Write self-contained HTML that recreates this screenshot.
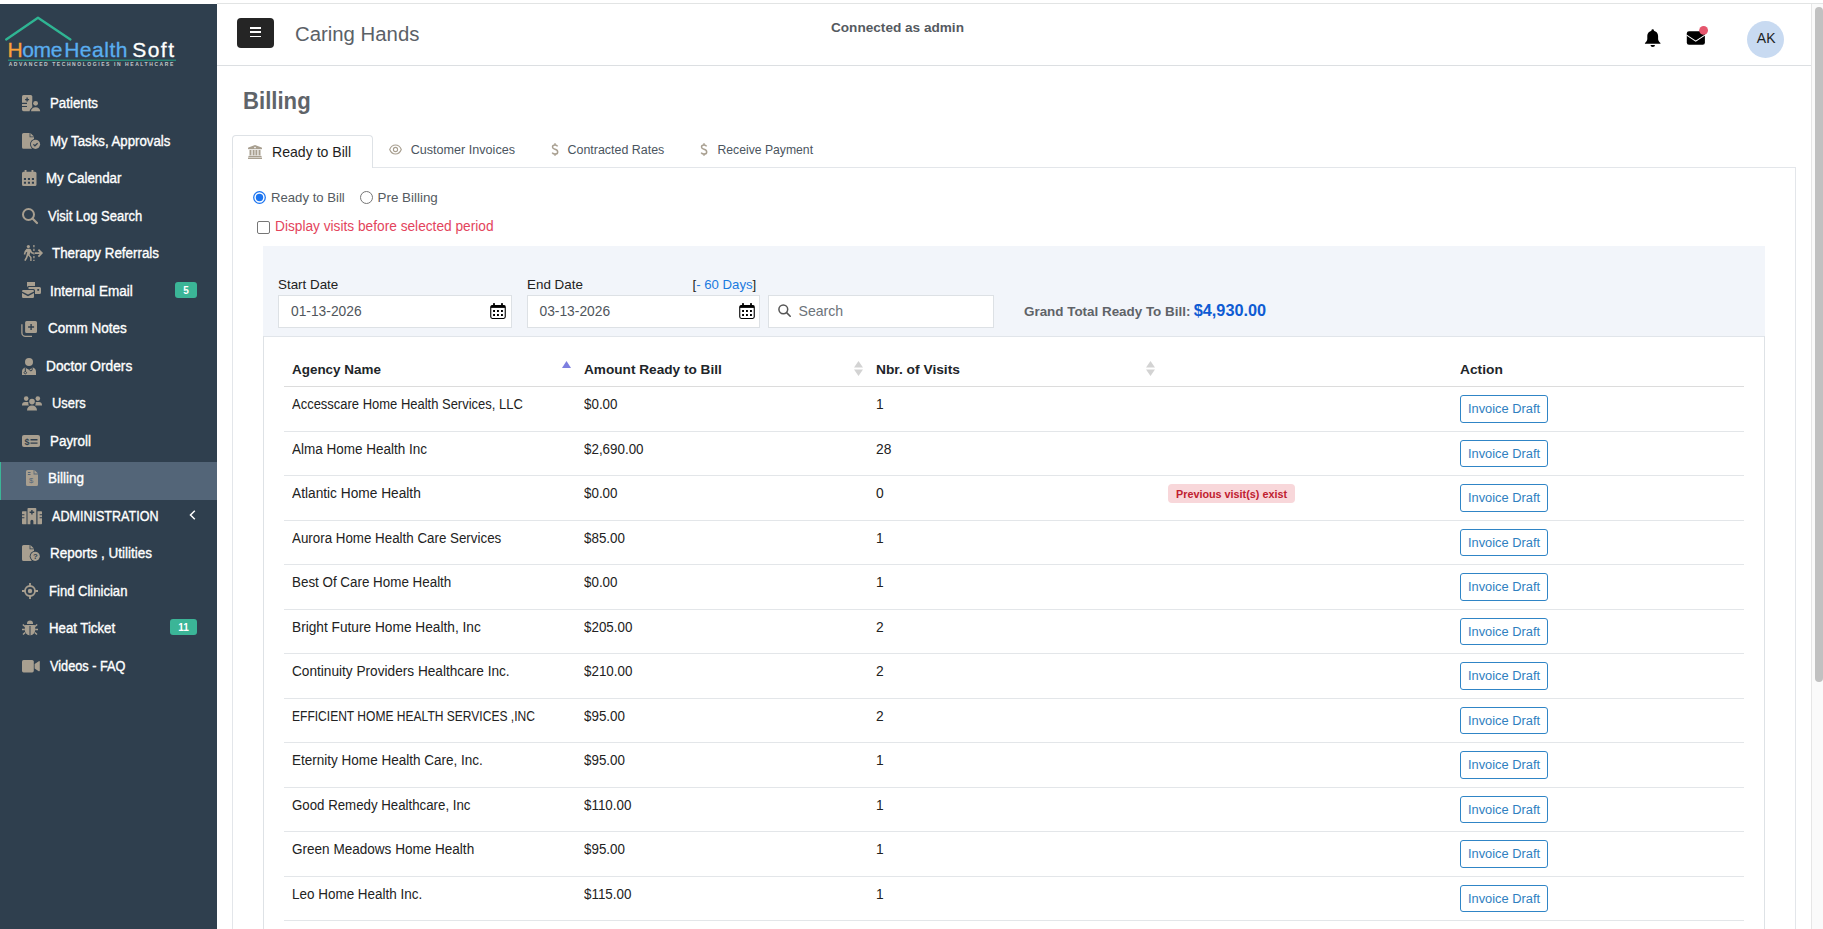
<!DOCTYPE html><html><head><meta charset="utf-8"><style>
*{box-sizing:border-box;margin:0;padding:0}
html,body{width:1823px;height:929px;overflow:hidden;background:#fff;font-family:"Liberation Sans",sans-serif;color:#222}
.a{position:absolute;white-space:nowrap}
#side{position:absolute;left:0;top:4px;width:217px;height:925px;background:#2f3f4e}
.t{position:absolute;color:#fff;white-space:nowrap;line-height:16px}
svg{position:absolute;overflow:visible}
.badge{position:absolute;background:#3bb597;color:#fff;font-weight:bold;font-size:10px;text-align:center;border-radius:3px;line-height:18px;height:16px;overflow:hidden}
.ic{fill:#a89f90}
#sb{position:absolute;left:1811px;top:4px;width:12px;height:925px;background:#fafafa;border-left:1px solid #e6e6e6}
#thumb{position:absolute;left:1815px;top:7px;width:8px;height:675px;background:#c1c1c1;border-radius:4px}
.btn{position:absolute;left:1460px;width:88px;height:27.5px;border:1px solid #3085c6;border-radius:3px;color:#2f7fbf;font-size:12.85px;line-height:25.6px;text-align:center;white-space:nowrap}
.rl{position:absolute;left:284px;width:1460px;height:1px;background:#e3e6e9}
.cell{position:absolute;font-size:13px;color:#222;line-height:16px;white-space:nowrap}
</style></head><body><div id="side"><svg style="left:0;top:-4px" width="217" height="70" viewBox="0 0 217 70"><path d="M6.2 39.4L38 17.8L70.4 39.4" fill="none" stroke="#2fb593" stroke-width="2.4" stroke-linejoin="round" stroke-linecap="round"/><rect x="8" y="59.6" width="168" height="1.3" fill="#2a8f7c"/></svg><div class="t" style="left:7.6px;top:33.5px;font-size:21px;line-height:24px;color:#f7a23b;-webkit-text-stroke:0.3px #f7a23b">H</div><div class="t" style="left:22.2px;top:33.5px;font-size:21px;line-height:24px;color:#5aaef0;-webkit-text-stroke:0.3px #5aaef0;letter-spacing:-0.3px">ome</div><div class="t" style="left:64.2px;top:33.5px;font-size:21px;line-height:24px;color:#5aaef0;-webkit-text-stroke:0.3px #5aaef0;letter-spacing:0.5px">Health</div><div class="t" style="left:132.2px;top:33.5px;font-size:21px;line-height:24px;color:#fff;-webkit-text-stroke:0.3px #fff;letter-spacing:1.5px">Soft</div><div class="t" style="left:8.7px;top:56.5px;font-size:5px;line-height:6px;letter-spacing:1.57px;color:#c3c7ca;font-weight:bold">ADVANCED TECHNOLOGIES IN HEALTHCARE</div><div class="a" style="left:0;top:458px;width:217px;height:38px;background:#536578;border-left:1px solid #3bb597"></div><div class="t" style="left:50.0px;top:91.0px;font-size:14.00px;transform:scaleX(0.9489);transform-origin:0 0;-webkit-text-stroke:0.35px #fff">Patients</div><svg style="left:22px;top:91px" width="19" height="17" viewBox="0 0 19 17"><rect class="ic" x="0" y="0" width="10.3" height="16.2" rx="1.6"/><path fill="#2f3f4e" d="M4.4 2.6h1.4v1.3h1.3v1.4H5.8v1.3H4.4V5.3H3.1V3.9h1.3zM0 7.8h5v1.1H0zM0 10.9h5v1.1H0z"/><circle cx="13.6" cy="8.3" r="3.3" fill="#2f3f4e"/><path fill="#2f3f4e" d="M7.6 17c0-3 2.2-5.2 6-5.2s6 2.2 6 5.2z"/><circle class="ic" cx="13.6" cy="8.3" r="2.4"/><path class="ic" d="M9 16.2c0-2.3 1.8-4 4.6-4s4.6 1.7 4.6 4z"/></svg><div class="t" style="left:50.0px;top:129.0px;font-size:14.00px;transform:scaleX(0.9449);transform-origin:0 0;-webkit-text-stroke:0.35px #fff">My Tasks, Approvals</div><svg style="left:22px;top:129px" width="18" height="17" viewBox="0 0 18 17"><path class="ic" d="M1.6 0H7.6v4.2H12v11.6H1.6A1.6 1.6 0 0 1 0 14.2V1.6A1.6 1.6 0 0 1 1.6 0zM8.4 0L12 3.5H8.4z"/><circle cx="13.5" cy="11.3" r="5.5" fill="#2f3f4e"/><circle class="ic" cx="13.5" cy="11.3" r="4.6"/><path fill="none" stroke="#2f3f4e" stroke-width="1.2" d="M11.4 11.4l1.5 1.4 2.7-2.6"/></svg><div class="t" style="left:46.0px;top:166.0px;font-size:14.00px;transform:scaleX(0.9500);transform-origin:0 0;-webkit-text-stroke:0.35px #fff">My Calendar</div><svg style="left:22px;top:166px" width="15" height="16" viewBox="0 0 15 16"><path class="ic" d="M2.6 0h1.9v1.7h5V0h1.9v1.7h1.6A1.5 1.5 0 0 1 14.5 3.2v11.4a1.5 1.5 0 0 1-1.5 1.5H1.5A1.5 1.5 0 0 1 0 14.6V3.2A1.5 1.5 0 0 1 1.5 1.7h1.1z"/><path fill="#2f3f4e" d="M1.9 7.9h2.1v2.1H1.9zM5.9 7.9h2.1v2.1H5.9zM9.9 7.9h2.1v2.1H9.9zM1.9 11.7h2.1v2.1H1.9zM5.9 11.7h2.1v2.1H5.9zM9.9 11.7h2.1v2.1H9.9z"/></svg><div class="t" style="left:48.0px;top:204.0px;font-size:14.00px;transform:scaleX(0.9263);transform-origin:0 0;-webkit-text-stroke:0.35px #fff">Visit Log Search</div><svg style="left:22px;top:204px" width="16" height="16" viewBox="0 0 16 16"><circle cx="6.5" cy="6.5" r="5.5" fill="none" stroke="#a89f90" stroke-width="2"/><path d="M10.5 10.5L15 15" stroke="#a89f90" stroke-width="2.2" stroke-linecap="round"/></svg><div class="t" style="left:52.0px;top:241.0px;font-size:14.00px;transform:scaleX(0.9550);transform-origin:0 0;-webkit-text-stroke:0.35px #fff">Therapy Referrals</div><svg style="left:22px;top:241px" width="21" height="16" viewBox="0 0 21 16"><circle class="ic" cx="6.4" cy="1.6" r="1.6"/><path class="ic" d="M4.6 3.8h3c.6 0 1 .3 1.3.8l1.2 2.5 1.5.7-.6 1.3-2-.9-.6-1.2-.8 2.9 2 2.4V16H8.2v-3.2L6.2 10.6l-1 2.7L3.6 16 2.2 15.3l1.8-3.3 1.3-5.3-1.4.7-.7 2.3-1.5-.4 1-3.2z"/><path fill="none" stroke="#a89f90" stroke-width="1.3" stroke-dasharray="2.2 1.5" d="M11.9 0v16"/><path fill="none" stroke="#a89f90" stroke-width="1.8" d="M13 8.1h6.6M16.4 4.6l3.4 3.5-3.4 3.5"/></svg><div class="t" style="left:50.4px;top:279.0px;font-size:14.00px;transform:scaleX(0.9662);transform-origin:0 0;-webkit-text-stroke:0.35px #fff">Internal Email</div><svg style="left:22px;top:278px" width="19" height="16" viewBox="0 0 19 16"><path class="ic" d="M5 0h8v4H6.5A1.5 1.5 0 0 0 5 5.5zM6.5 5H17.5A1.5 1.5 0 0 1 19 6.5v4A1.5 1.5 0 0 1 17.5 12H13V8.5A1.5 1.5 0 0 0 11.5 7h-5z"/><path fill="#2f3f4e" d="M15.3 7h1.8v1.8h-1.8z"/><path class="ic" d="M0 9.2A1.2 1.2 0 0 1 1.2 8h9.6A1.2 1.2 0 0 1 12 9.2v.3L6 12.6 0 9.5zM0 11l6 3.2 6-3.2v3.8A1.2 1.2 0 0 1 10.8 16H1.2A1.2 1.2 0 0 1 0 14.8z"/></svg><div class="t" style="left:48.0px;top:316.0px;font-size:14.00px;transform:scaleX(0.9647);transform-origin:0 0;-webkit-text-stroke:0.35px #fff">Comm Notes</div><svg style="left:21px;top:317px" width="16" height="16" viewBox="0 0 16 16"><path class="ic" d="M5.6 0h8.9A1.5 1.5 0 0 1 16 1.5v8.9a1.5 1.5 0 0 1-1.5 1.5H5.6a1.5 1.5 0 0 1-1.5-1.5V1.5A1.5 1.5 0 0 1 5.6 0z"/><path fill="#2f3f4e" d="M9.4 3h1.4v2.3h2.3v1.4h-2.3V9H9.4V6.7H7.1V5.3h2.3z"/><path fill="none" stroke="#a89f90" stroke-width="1.3" d="M.9 3.2v8.6a3.6 3.6 0 0 0 3.6 3.6H11"/></svg><div class="t" style="left:46.0px;top:354.0px;font-size:14.00px;transform:scaleX(0.9817);transform-origin:0 0;-webkit-text-stroke:0.35px #fff">Doctor Orders</div><svg style="left:22px;top:353.5px" width="14" height="17" viewBox="0 0 14 17"><circle class="ic" cx="7" cy="4" r="4"/><path class="ic" d="M3 9.5l4 2.3 4-2.3c1.9.6 3 2.2 3 4.2V17H0v-3.3c0-2 1.1-3.6 3-4.2z"/><path fill="none" stroke="#2f3f4e" stroke-width="1" d="M3.3 10v3.5M3.3 13.5a1.2 1.2 0 1 0 .01 0M10.2 10v1.5a1.3 1.3 0 0 1-2.6 0"/></svg><div class="t" style="left:52.4px;top:391.0px;font-size:14.00px;transform:scaleX(0.9190);transform-origin:0 0;-webkit-text-stroke:0.35px #fff">Users</div><svg style="left:22px;top:392px" width="20" height="15" viewBox="0 0 20 15"><circle class="ic" cx="4.2" cy="2.6" r="2.3"/><circle class="ic" cx="15.8" cy="2.6" r="2.3"/><circle class="ic" cx="10" cy="5.6" r="2.8"/><path class="ic" d="M0 9c0-2 1.2-3 3-3h2.3c.4 0 .8.1 1.1.3A4 4 0 0 0 6.9 9.5H0zM20 9c0-2-1.2-3-3-3h-2.3c-.4 0-.8.1-1.1.3a4 4 0 0 1-.5 3.2H20zM5 14.5c0-3 1.8-5 5-5s5 2 5 5z"/></svg><div class="t" style="left:50.0px;top:429.0px;font-size:14.00px;transform:scaleX(0.9580);transform-origin:0 0;-webkit-text-stroke:0.35px #fff">Payroll</div><svg style="left:22px;top:430.5px" width="18" height="13" viewBox="0 0 18 13"><rect class="ic" x="0" y="0" width="18" height="12" rx="2"/><text x="2.6" y="10.2" font-size="9" font-weight="bold" fill="#2f3f4e" font-family="Liberation Sans">$</text><path fill="#2f3f4e" d="M8.5 4h7v1.4h-7zM8.5 7.4h7v1.4h-7z"/></svg><div class="t" style="left:48.0px;top:466.0px;font-size:14.00px;transform:scaleX(0.9639);transform-origin:0 0;-webkit-text-stroke:0.35px #fff">Billing</div><svg style="left:26px;top:466px" width="12" height="16" viewBox="0 0 12 16"><path class="ic" d="M1.5 0H7.6v4.4H12v10.1A1.5 1.5 0 0 1 10.5 16h-9A1.5 1.5 0 0 1 0 14.5v-13A1.5 1.5 0 0 1 1.5 0zM8.4 0L12 3.6H8.4z"/><path fill="#536578" d="M1.9 2.1h2.6v.9H1.9zM1.9 4h2.6v.9H1.9z"/><text x="3.1" y="13.3" font-size="7.8" fill="#536578" font-family="Liberation Sans">$</text></svg><div class="t" style="left:52.0px;top:504.0px;font-size:14.00px;transform:scaleX(0.8969);transform-origin:0 0;-webkit-text-stroke:0.35px #fff">ADMINISTRATION</div><svg style="left:22px;top:503.5px" width="20" height="17" viewBox="0 0 20 17"><path class="ic" d="M.7 3.2h3.8V16.2H.7A.7.7 0 0 1 0 15.5V3.9a.7.7 0 0 1 .7-.7zM15.5 3.2h3.8a.7.7 0 0 1 .7.7v11.6a.7.7 0 0 1-.7.7h-3.8zM6.3 0h7.2a.8.8 0 0 1 .8.8v15.4H11.4v-3a1.5 1.5 0 0 0-3 0v3H5.5V.8a.8.8 0 0 1 .8-.8z"/><path fill="#2f3f4e" d="M9.2 2h1.4v1.6h1.6V5h-1.6v1.6H9.2V5H7.6V3.6h1.6zM0 6.3h2.4v1H0zM0 9.3h2.4v1H0zM17.6 6.3H20v1h-2.4zM17.6 9.3H20v1h-2.4z"/></svg><div class="t" style="left:50.0px;top:541.0px;font-size:14.00px;transform:scaleX(0.9640);transform-origin:0 0;-webkit-text-stroke:0.35px #fff">Reports , Utilities</div><svg style="left:22px;top:541px" width="18" height="17" viewBox="0 0 18 17"><path class="ic" d="M1.6 0H7.6v4.2H12v11.8H1.6A1.6 1.6 0 0 1 0 14.4V1.6A1.6 1.6 0 0 1 1.6 0zM8.4 0L12 3.5H8.4z"/><circle cx="13.2" cy="11.3" r="5.5" fill="#2f3f4e"/><circle class="ic" cx="13.2" cy="11.3" r="4.6"/><text x="11.1" y="14.2" font-size="7.8" font-weight="bold" fill="#2f3f4e" font-family="Liberation Sans">?</text></svg><div class="t" style="left:48.7px;top:579.0px;font-size:14.00px;transform:scaleX(0.9330);transform-origin:0 0;-webkit-text-stroke:0.35px #fff">Find Clinician</div><svg style="left:22px;top:579px" width="16" height="16" viewBox="0 0 16 16"><circle cx="8" cy="8" r="5" fill="none" stroke="#a89f90" stroke-width="1.8"/><circle class="ic" cx="8" cy="8" r="2.2"/><path stroke="#a89f90" stroke-width="1.8" d="M8 0v3M8 13v3M0 8h3M13 8h3"/></svg><div class="t" style="left:48.7px;top:616.0px;font-size:14.00px;transform:scaleX(0.9434);transform-origin:0 0;-webkit-text-stroke:0.35px #fff">Heat Ticket</div><svg style="left:22px;top:616px" width="16" height="16" viewBox="0 0 16 16"><path class="ic" d="M5 3.5a3 3 0 0 1 6 0v.5H5z"/><path class="ic" d="M4 5h8c.8 0 1.2.5 1.2 1.3V10a5.2 5.2 0 0 1-10.4 0V6.3C2.8 5.5 3.2 5 4 5z"/><path fill="#2f3f4e" d="M7.5 6h1v9h-1z"/><path fill="none" stroke="#a89f90" stroke-width="1.5" d="M3 6.5L.8 4.5M13 6.5l2.2-2M2.8 9.5H0M13.2 9.5H16M3.2 12.5L1 14.5M12.8 12.5l2.2 2"/></svg><div class="t" style="left:49.7px;top:654.0px;font-size:14.00px;transform:scaleX(0.9097);transform-origin:0 0;-webkit-text-stroke:0.35px #fff">Videos - FAQ</div><svg style="left:22px;top:655.7px" width="18" height="13" viewBox="0 0 18 13"><rect class="ic" x="0" y="0" width="11.8" height="12.4" rx="1.6"/><path class="ic" d="M12.6 4L16.8 1.2c.5-.3 1 0 1 .6v8.8c0 .6-.5.9-1 .6L12.6 8.4z"/></svg><div class="badge" style="left:175px;top:278px;width:22px">5</div><div class="badge" style="left:170px;top:615px;width:27px">11</div><svg style="left:189px;top:506px" width="7" height="10" viewBox="0 0 7 10"><path d="M5.8 0.8L1.5 5l4.3 4.2" fill="none" stroke="#fff" stroke-width="1.5"/></svg></div>
<div class="a" style="left:217px;top:3px;width:1606px;height:1px;background:#e2e4e4"></div>
<div class="a" style="left:217px;top:65px;width:1594px;height:1px;background:#dcdfe2"></div>
<div class="a" style="left:237px;top:18px;width:37px;height:30px;background:#252525;border-radius:4px"></div>
<div class="a" style="left:250px;top:27px;width:11px;height:1.6px;background:#fff"></div>
<div class="a" style="left:250px;top:31.3px;width:11px;height:1.6px;background:#fff"></div>
<div class="a" style="left:250px;top:35.6px;width:11px;height:1.6px;background:#fff"></div>
<div class="a" style="left:295px;top:23px;font-size:20.35px;line-height:22px;color:#5b6167">Caring Hands</div>
<div class="a" style="left:831px;top:20px;font-size:13.6px;line-height:15px;font-weight:bold;color:#555a5f">Connected as admin</div>
<svg style="left:1644px;top:28px" width="18" height="20" viewBox="0 0 18 20"><circle cx="8.7" cy="2.4" r="1.25"/><path d="M8.7 2.7C5.3 2.7 3.3 5.1 3.3 8.3V11C3.3 12.6 2.4 13.6 1.2 14.8C0.6 15.4 0.8 15.8 1.6 15.8H15.8C16.6 15.8 16.8 15.4 16.2 14.8C15 13.6 14.1 12.6 14.1 11V8.3C14.1 5.1 12.1 2.7 8.7 2.7Z"/><path d="M6.5 17.1H11A2.25 2 0 0 1 6.5 17.1Z"/></svg>
<svg style="left:1686px;top:24px" width="24" height="22" viewBox="0 0 24 22"><rect x="0.8" y="7.2" width="18.1" height="13.6" rx="2.2"/><path d="M0.6 11.1L9.75 17.1L18.9 11.1" fill="none" stroke="#fff" stroke-width="1.1"/><circle cx="17.6" cy="6.3" r="4.4" fill="#e5566d"/></svg>
<div class="a" style="left:1747px;top:20.6px;width:37px;height:37px;border-radius:50%;background:#c8daf1"></div>
<div class="a" style="left:1756.8px;top:30px;font-size:14px;line-height:16px;color:#1d1d1d">AK</div>
<div class="a" style="left:243px;top:87px;font-size:23.2px;line-height:28px;font-weight:bold;color:#5f6469;transform:scaleX(0.955);transform-origin:0 0">Billing</div>
<div class="a" style="left:232px;top:167px;width:1564px;height:800px;border:1px solid #e3e6ea;border-bottom:0"></div>
<div class="a" style="left:232px;top:135px;width:141px;height:33px;border:1px solid #dee2e6;border-bottom:0;border-radius:4px 4px 0 0;background:#fff"></div>
<svg style="left:248px;top:145px" width="14" height="14" viewBox="0 0 14 14"><path class="ic" d="M7 0l6.6 2.6c.3.1.4.4.4.7v.4c0 .3-.2.5-.5.5h-13C.2 4.2 0 4 0 3.7v-.4c0-.3.1-.6.4-.7z"/><path class="ic" d="M1.5 5h2v5.2h-2zM4.6 5h2v5.2h-2zM7.4 5h2v5.2h-2zM10.5 5h2v5.2h-2zM1 10.8h12c.4 0 .6.3.6.6V12H.4v-.6c0-.3.2-.6.6-.6zM0 12.6h14V14H0z"/><circle cx="7" cy="2.6" r="0.8" fill="#fff"/></svg>
<div class="a" style="left:272px;top:143px;font-size:14.1px;line-height:18px;color:#1e1e1e">Ready to Bill</div>
<svg style="left:389px;top:144px" width="13" height="11" viewBox="0 0 13 11"><path d="M6.5 1C3.6 1 1.6 3.2.7 5.5c.9 2.3 2.9 4.5 5.8 4.5s4.9-2.2 5.8-4.5C11.4 3.2 9.4 1 6.5 1z" fill="none" stroke="#a89f90" stroke-width="1.1"/><circle cx="6.5" cy="5.5" r="2.1" fill="none" stroke="#a89f90" stroke-width="1.1"/></svg>
<div class="a" style="left:410.7px;top:142px;font-size:12.6px;line-height:16px;color:#4b5560">Customer Invoices</div>
<svg style="left:550.8px;top:142.5px" width="8" height="13" viewBox="0 0 8 13"><path d="M6.6 3.3C6.1 2.4 5.1 1.9 4 1.9C2.6 1.9 1.5 2.7 1.5 4C1.5 5.4 2.7 5.9 4 6.3C5.5 6.8 6.7 7.4 6.7 8.9C6.7 10.3 5.5 11.1 4 11.1C2.8 11.1 1.8 10.6 1.2 9.6M4 0.2V1.9M4 11.1V12.8" fill="none" stroke="#a89f90" stroke-width="1.5"/></svg>
<div class="a" style="left:567.5px;top:142px;font-size:12.45px;line-height:16px;color:#4b5560">Contracted Rates</div>
<svg style="left:700.1px;top:142.5px" width="8" height="13" viewBox="0 0 8 13"><path d="M6.6 3.3C6.1 2.4 5.1 1.9 4 1.9C2.6 1.9 1.5 2.7 1.5 4C1.5 5.4 2.7 5.9 4 6.3C5.5 6.8 6.7 7.4 6.7 8.9C6.7 10.3 5.5 11.1 4 11.1C2.8 11.1 1.8 10.6 1.2 9.6M4 0.2V1.9M4 11.1V12.8" fill="none" stroke="#a89f90" stroke-width="1.5"/></svg>
<div class="a" style="left:717.5px;top:142px;font-size:12.2px;line-height:16px;color:#4b5560">Receive Payment</div>
<svg style="left:253px;top:191px" width="13" height="13" viewBox="0 0 13 13"><circle cx="6.5" cy="6.5" r="5.8" fill="#fff" stroke="#1b74f0" stroke-width="1.25"/><circle cx="6.5" cy="6.5" r="3.7" fill="#1b74f0"/></svg>
<div class="a" style="left:271px;top:189.7px;font-size:13.15px;line-height:16px;color:#555b61">Ready to Bill</div>
<div class="a" style="left:360px;top:191px;width:13px;height:13px;border-radius:50%;border:1px solid #767676;background:#fff"></div>
<div class="a" style="left:377.5px;top:189.7px;font-size:13.4px;line-height:16px;color:#555b61">Pre Billing</div>
<div class="a" style="left:257px;top:221px;width:13px;height:13px;border-radius:2px;border:1px solid #767676;background:#fff"></div>
<div class="a" style="left:274.8px;top:219px;font-size:13.8px;line-height:16px;color:#e3445c;transform:scaleX(0.9930);transform-origin:0 0">Display visits before selected period</div>
<div class="a" style="left:263px;top:246px;width:1502px;height:91px;background:#f2f5fa;border-bottom:1px solid #e1e5ea"></div>
<div class="a" style="left:263px;top:336px;width:1502px;height:700px;border:1px solid #dee2e6;border-top:0"></div>
<div class="a" style="left:278px;top:276.8px;font-size:13.4px;line-height:16px;color:#222">Start Date</div>
<div class="a" style="left:527px;top:276.8px;font-size:13.4px;line-height:16px;color:#222">End Date</div>
<div class="a" style="left:692.5px;top:276.8px;font-size:13.2px;line-height:16px;color:#222">[<span style="color:#1a7ae0">- 60 Days</span>]</div>
<div class="a" style="left:278px;top:295px;width:234px;height:33px;background:#fff;border:1px solid #dde1e5"></div>
<div class="a" style="left:527px;top:295px;width:233px;height:33px;background:#fff;border:1px solid #dde1e5"></div>
<div class="a" style="left:768px;top:295px;width:226px;height:33px;background:#fff;border:1px solid #dde1e5"></div>
<div class="a" style="left:291px;top:304.1px;font-size:13.8px;line-height:16px;color:#50565c">01-13-2026</div>
<div class="a" style="left:539.5px;top:304.1px;font-size:13.8px;line-height:16px;color:#50565c">03-13-2026</div>
<svg style="left:490.2px;top:303px" width="17" height="16" viewBox="0 0 17 16"><rect x="3.1" y="0" width="1.8" height="3.2" rx="0.6" fill="#000"/><rect x="11.1" y="0" width="1.8" height="3.2" rx="0.6" fill="#000"/><rect x="0.75" y="2.55" width="14.5" height="12.9" rx="1.6" fill="none" stroke="#000" stroke-width="1.1"/><path d="M0.8 2.6h14.4v2.3H0.8z" fill="#000"/><path d="M3.1 7h1.9v1.9H3.1zM7 7h1.9v1.9H7zM11 7h1.9v1.9H11zM3.1 11h1.9v1.9H3.1zM7 11h1.9v1.9H7zM11 11h1.9v1.9H11z" fill="#000"/></svg>
<svg style="left:739.3px;top:303px" width="17" height="16" viewBox="0 0 17 16"><rect x="3.1" y="0" width="1.8" height="3.2" rx="0.6" fill="#000"/><rect x="11.1" y="0" width="1.8" height="3.2" rx="0.6" fill="#000"/><rect x="0.75" y="2.55" width="14.5" height="12.9" rx="1.6" fill="none" stroke="#000" stroke-width="1.1"/><path d="M0.8 2.6h14.4v2.3H0.8z" fill="#000"/><path d="M3.1 7h1.9v1.9H3.1zM7 7h1.9v1.9H7zM11 7h1.9v1.9H11zM3.1 11h1.9v1.9H3.1zM7 11h1.9v1.9H7zM11 11h1.9v1.9H11z" fill="#000"/></svg>
<svg style="left:778px;top:304px" width="13" height="13" viewBox="0 0 13 13"><circle cx="5.3" cy="5.3" r="4.4" fill="none" stroke="#555" stroke-width="1.5"/><path d="M8.6 8.6l3.6 3.6" stroke="#555" stroke-width="1.6" stroke-linecap="round"/></svg>
<div class="a" style="left:798.5px;top:303.3px;font-size:14.1px;line-height:16px;color:#6c737a">Search</div>
<div class="a" style="left:1024px;top:304px;font-size:13.42px;line-height:16px;font-weight:bold;color:#5f6368">Grand Total Ready To Bill:</div>
<div class="a" style="left:1193.7px;top:300px;font-size:16.3px;line-height:20px;font-weight:bold;color:#0e5bd3">$4,930.00</div>
<div class="a" style="left:292px;top:362px;font-size:13.45px;line-height:16px;font-weight:bold;color:#212529;transform:scaleX(1.0000);transform-origin:0 0">Agency Name</div>
<div class="a" style="left:584px;top:362px;font-size:13.45px;line-height:16px;font-weight:bold;color:#212529;transform:scaleX(1.0140);transform-origin:0 0">Amount Ready to Bill</div>
<div class="a" style="left:876px;top:362px;font-size:13.45px;line-height:16px;font-weight:bold;color:#212529;transform:scaleX(1.0250);transform-origin:0 0">Nbr. of Visits</div>
<div class="a" style="left:1460px;top:362px;font-size:13.45px;line-height:16px;font-weight:bold;color:#212529;transform:scaleX(1.0250);transform-origin:0 0">Action</div>
<svg style="left:562px;top:361px" width="9" height="7" viewBox="0 0 9 7"><path d="M4.5 0L9 7H0z" fill="#7d7fe0"/></svg>
<svg style="left:854px;top:361px" width="9" height="15" viewBox="0 0 9 15"><path d="M4.5 0L9 6.6H0zM4.5 15L9 8.4H0z" fill="#d3d3d3"/></svg>
<svg style="left:1146px;top:361px" width="9" height="15" viewBox="0 0 9 15"><path d="M4.5 0L9 6.6H0zM4.5 15L9 8.4H0z" fill="#d3d3d3"/></svg>
<div class="a" style="left:284px;top:386px;width:1460px;height:1px;background:#dcdcdc"></div>
<div class="rl" style="top:431px"></div>
<div class="cell" style="left:292px;top:397px;font-size:13.8px;transform:scaleX(0.9404);transform-origin:0 0">Accesscare Home Health Services, LLC</div>
<div class="cell" style="left:584px;top:397px;font-size:13.8px;transform:scaleX(0.9700);transform-origin:0 0">$0.00</div>
<div class="cell" style="left:876px;top:397px;font-size:13.8px">1</div>
<div class="btn" style="top:395.30px">Invoice Draft</div>
<div class="rl" style="top:475px"></div>
<div class="cell" style="left:292px;top:442px;font-size:13.8px;transform:scaleX(0.9783);transform-origin:0 0">Alma Home Health Inc</div>
<div class="cell" style="left:584px;top:442px;font-size:13.8px;transform:scaleX(0.9700);transform-origin:0 0">$2,690.00</div>
<div class="cell" style="left:876px;top:442px;font-size:13.8px">28</div>
<div class="btn" style="top:439.80px">Invoice Draft</div>
<div class="rl" style="top:520px"></div>
<div class="cell" style="left:292px;top:486px;font-size:13.8px;transform:scaleX(0.9938);transform-origin:0 0">Atlantic Home Health</div>
<div class="cell" style="left:584px;top:486px;font-size:13.8px;transform:scaleX(0.9700);transform-origin:0 0">$0.00</div>
<div class="cell" style="left:876px;top:486px;font-size:13.8px">0</div>
<div class="btn" style="top:484.30px">Invoice Draft</div>
<div class="a" style="left:1168px;top:484px;width:127px;height:19px;border-radius:4px;background:#f8d7da;color:#c0202f;font-weight:bold;font-size:10.8px;line-height:20.5px;text-align:center">Previous visit(s) exist</div>
<div class="rl" style="top:564px"></div>
<div class="cell" style="left:292px;top:531px;font-size:13.8px;transform:scaleX(0.9676);transform-origin:0 0">Aurora Home Health Care Services</div>
<div class="cell" style="left:584px;top:531px;font-size:13.8px;transform:scaleX(0.9700);transform-origin:0 0">$85.00</div>
<div class="cell" style="left:876px;top:531px;font-size:13.8px">1</div>
<div class="btn" style="top:528.80px">Invoice Draft</div>
<div class="rl" style="top:609px"></div>
<div class="cell" style="left:292px;top:575px;font-size:13.8px;transform:scaleX(0.9706);transform-origin:0 0">Best Of Care Home Health</div>
<div class="cell" style="left:584px;top:575px;font-size:13.8px;transform:scaleX(0.9700);transform-origin:0 0">$0.00</div>
<div class="cell" style="left:876px;top:575px;font-size:13.8px">1</div>
<div class="btn" style="top:573.30px">Invoice Draft</div>
<div class="rl" style="top:653px"></div>
<div class="cell" style="left:292px;top:620px;font-size:13.8px;transform:scaleX(0.9926);transform-origin:0 0">Bright Future Home Health, Inc</div>
<div class="cell" style="left:584px;top:620px;font-size:13.8px;transform:scaleX(0.9700);transform-origin:0 0">$205.00</div>
<div class="cell" style="left:876px;top:620px;font-size:13.8px">2</div>
<div class="btn" style="top:617.80px">Invoice Draft</div>
<div class="rl" style="top:698px"></div>
<div class="cell" style="left:292px;top:664px;font-size:13.8px;transform:scaleX(0.9890);transform-origin:0 0">Continuity Providers Healthcare Inc.</div>
<div class="cell" style="left:584px;top:664px;font-size:13.8px;transform:scaleX(0.9700);transform-origin:0 0">$210.00</div>
<div class="cell" style="left:876px;top:664px;font-size:13.8px">2</div>
<div class="btn" style="top:662.30px">Invoice Draft</div>
<div class="rl" style="top:742px"></div>
<div class="cell" style="left:292px;top:709px;font-size:13.8px;transform:scaleX(0.8729);transform-origin:0 0">EFFICIENT HOME HEALTH SERVICES ,INC</div>
<div class="cell" style="left:584px;top:709px;font-size:13.8px;transform:scaleX(0.9700);transform-origin:0 0">$95.00</div>
<div class="cell" style="left:876px;top:709px;font-size:13.8px">2</div>
<div class="btn" style="top:706.80px">Invoice Draft</div>
<div class="rl" style="top:787px"></div>
<div class="cell" style="left:292px;top:753px;font-size:13.8px;transform:scaleX(0.9798);transform-origin:0 0">Eternity Home Health Care, Inc.</div>
<div class="cell" style="left:584px;top:753px;font-size:13.8px;transform:scaleX(0.9700);transform-origin:0 0">$95.00</div>
<div class="cell" style="left:876px;top:753px;font-size:13.8px">1</div>
<div class="btn" style="top:751.30px">Invoice Draft</div>
<div class="rl" style="top:831px"></div>
<div class="cell" style="left:292px;top:798px;font-size:13.8px;transform:scaleX(0.9618);transform-origin:0 0">Good Remedy Healthcare, Inc</div>
<div class="cell" style="left:584px;top:798px;font-size:13.8px;transform:scaleX(0.9700);transform-origin:0 0">$110.00</div>
<div class="cell" style="left:876px;top:798px;font-size:13.8px">1</div>
<div class="btn" style="top:795.80px">Invoice Draft</div>
<div class="rl" style="top:876px"></div>
<div class="cell" style="left:292px;top:842px;font-size:13.8px;transform:scaleX(0.9816);transform-origin:0 0">Green Meadows Home Health</div>
<div class="cell" style="left:584px;top:842px;font-size:13.8px;transform:scaleX(0.9700);transform-origin:0 0">$95.00</div>
<div class="cell" style="left:876px;top:842px;font-size:13.8px">1</div>
<div class="btn" style="top:840.30px">Invoice Draft</div>
<div class="rl" style="top:920px"></div>
<div class="cell" style="left:292px;top:887px;font-size:13.8px;transform:scaleX(0.9758);transform-origin:0 0">Leo Home Health Inc.</div>
<div class="cell" style="left:584px;top:887px;font-size:13.8px;transform:scaleX(0.9700);transform-origin:0 0">$115.00</div>
<div class="cell" style="left:876px;top:887px;font-size:13.8px">1</div>
<div class="btn" style="top:884.80px">Invoice Draft</div>
<div id="sb"></div><div id="thumb"></div></body></html>
